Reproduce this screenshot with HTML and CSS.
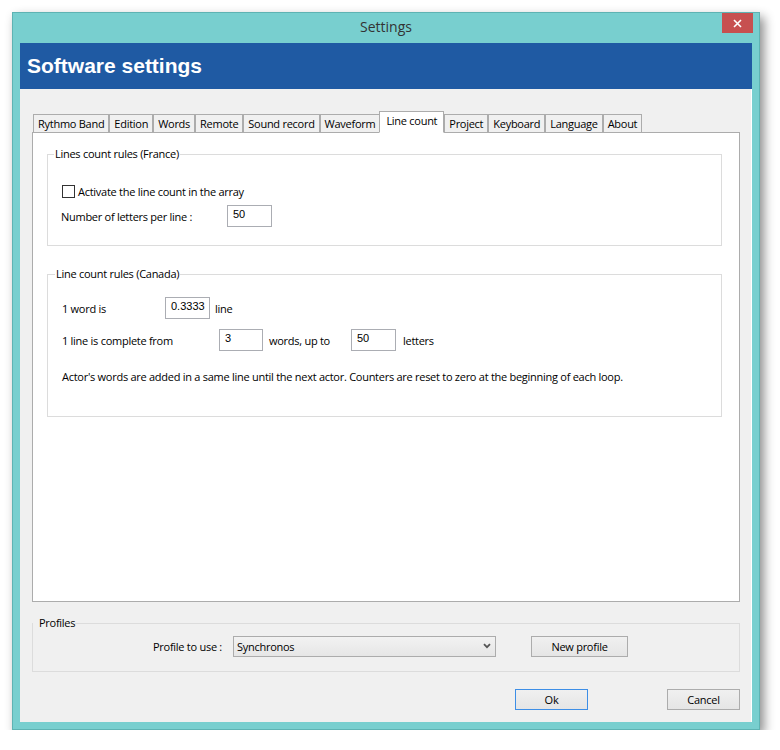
FILE: index.html
```html
<!DOCTYPE html>
<html>
<head>
  <meta charset="utf-8">
  <title>Settings</title>
  <link rel="stylesheet" href="styles.css">
</head>
<body>

  <div class="window">
    <div class="titlebar">
      <span class="title">Settings</span>
      <button class="close" type="button">
        <svg width="9" height="9" viewBox="0 0 9 9"><path d="M1 1L8 8M8 1L1 8" stroke="#fff" stroke-width="1.6" fill="none"/></svg>
      </button>
    </div>

    <div class="client">
      <div class="banner">Software settings</div>

      <section class="tabs">
        <ul class="tab-list">
          <li class="tab">Rythmo Band</li>
          <li class="tab">Edition</li>
          <li class="tab">Words</li>
          <li class="tab">Remote</li>
          <li class="tab">Sound record</li>
          <li class="tab">Waveform</li>
          <li class="tab active">Line count</li>
          <li class="tab">Project</li>
          <li class="tab">Keyboard</li>
          <li class="tab">Language</li>
          <li class="tab">About</li>
        </ul>

        <div class="panel">
          <fieldset class="group france">
            <legend>Lines count rules (France)</legend>
            <label class="row check-row">
              <span class="checkbox"></span>
              <span>Activate the line count in the array</span>
            </label>
            <div class="row">
              <span class="label label-letters">Number of letters per line :</span>
              <span class="field">50</span>
            </div>
          </fieldset>

          <fieldset class="group canada">
            <legend>Line count rules (Canada)</legend>
            <div class="row">
              <span class="label label-word">1 word is</span>
              <span class="field">0.3333</span>
              <span class="after">line</span>
            </div>
            <div class="row row-gap">
              <span class="label label-line">1 line is complete from</span>
              <span class="field">3</span>
              <span class="after words">words, up to</span>
              <span class="field">50</span>
              <span class="after letters">letters</span>
            </div>
            <p class="note">Actor's words are added in a same line until the next actor. Counters are reset to zero at the beginning of each loop.</p>
          </fieldset>
        </div>
      </section>

      <fieldset class="group profiles">
        <legend>Profiles</legend>
        <div class="profile-row">
          <span class="profile-label">Profile to use :</span>
          <div class="select">
            <span>Synchronos</span>
            <svg width="8" height="6" viewBox="0 0 8 6"><path d="M1 1.2L4 4.2L7 1.2" stroke="#555" stroke-width="1.8" fill="none"/></svg>
          </div>
          <button class="btn new-profile" type="button">New profile</button>
        </div>
      </fieldset>

      <div class="actions">
        <button class="btn default" type="button">Ok</button>
        <button class="btn" type="button">Cancel</button>
      </div>
    </div>
  </div>

</body>
</html>
```

FILE: styles.css
```css
* {
  box-sizing: border-box;
}

body {
  margin: 0;
  background: #fff;
  font-family: "Open Sans", "Noto Sans", sans-serif;
  font-size: 11px;
  letter-spacing: -0.27px;
  color: #000;
}

.window {
  margin: 12px 0 0 12px;
  width: 748px;
  height: 718px;
  border: 1px solid #5eb3b3;
  background: #78cfcf;
  padding: 0 7px 7px 7px;
  display: flex;
  flex-direction: column;
  box-shadow: 4px 5px 10px rgba(0, 0, 0, 0.45);
}

.titlebar {
  position: relative;
  height: 30px;
  display: flex;
  align-items: center;
  justify-content: center;
}

.title {
  font-size: 14px;
  letter-spacing: 0;
  color: #333;
  margin-top: -3px;
}

/* close button sits over the title bar's right corner */
.close {
  position: absolute;
  top: 0;
  right: -1px;
  width: 31px;
  height: 20px;
  border: 0;
  padding: 0;
  background: #c75050;
  display: flex;
  align-items: center;
  justify-content: center;
}

.client {
  flex: 1;
  background: #f0f0f0;
  display: flex;
  flex-direction: column;
  padding: 0 11px 0 12px;
  border-right: 1px solid #fff;
}

.banner {
  margin: 0 -12px 0 -12px;
  height: 46px;
  background: #1f5aa3;
  color: #fff;
  font-family: "Liberation Sans", Arial, sans-serif;
  font-weight: bold;
  font-size: 21px;
  letter-spacing: 0;
  padding-left: 7px;
  display: flex;
  align-items: center;
  padding-bottom: 1px;
}

/* tabs */
.tabs {
  margin-top: 22px;
}

.tab-list {
  list-style: none;
  margin: 0 0 -1px 0;
  padding: 0 0 0 1px;
  display: flex;
  align-items: flex-end;
  position: relative;
  z-index: 1;
}

.tab {
  height: 19px;
  border: 1px solid #acacac;
  background: #f0f0f0;
  padding: 0 4px;
  line-height: 17px;
  white-space: nowrap;
}

.tab.active {
  height: 22px;
  background: #fff;
  border-bottom-color: #fff;
  line-height: 17px;
  margin: 0 0 0 -1px;
  padding: 0 6px;
}

.panel {
  height: 470px;
  background: #fff;
  border: 1px solid #acacac;
  padding: 13px 17px 0 14px;
}

.group {
  border: 1px solid #dcdcdc;
  margin: 0;
  min-width: 0;
}

.group legend {
  padding: 0 1px;
  margin-left: -7px;
  line-height: 16px;
}

.france {
  padding: 18px 14px 18px 13px;
}

.check-row {
  padding-left: 1px;
}

.canada {
  margin-top: 20px;
  padding: 15px 14px 31px 14px;
}

.row {
  display: flex;
  align-items: center;
  height: 22px;
}

.check-row + .row {
  margin-top: 3px;
}

.row-gap {
  margin-top: 10px;
}

.checkbox {
  width: 13px;
  height: 13px;
  border: 1px solid #333;
  background: #fff;
  margin-right: 3px;
}

.label-letters {
  width: 166px;
}

.label-word {
  width: 103px;
}

.label-line {
  width: 157px;
}

.field {
  width: 45px;
  height: 22px;
  border: 1px solid #abadb3;
  background: #fff;
  font-family: "Liberation Sans", Arial, sans-serif;
  font-size: 11px;
  letter-spacing: 0;
  line-height: 16px;
  padding: 0 5px;
}

.label-line + .field {
  width: 44px;
}

.after {
  margin-left: 5px;
}

.words {
  width: 82px;
  margin-left: 6px;
}

.letters {
  margin-left: 7px;
}

.note {
  margin: 18px 0 0 0;
  line-height: 16px;
}

/* profiles + dialog buttons */
.profiles {
  margin-top: 13px;
  padding: 4px 12px 14px 0;
}

.profiles legend {
  margin-left: 0;
  padding: 0 0 0 6px;
}

.profile-row {
  display: flex;
  align-items: center;
  height: 22px;
}

.profile-label {
  width: 189px;
  text-align: right;
  margin-right: 11px;
}

.select {
  width: 263px;
  height: 21px;
  border: 1px solid #acacac;
  background: linear-gradient(#f2f2f2, #e6e6e6);
  display: flex;
  align-items: center;
  justify-content: space-between;
  padding: 0 4px 0 3px;
}

.btn {
  font-family: "Open Sans", "Noto Sans", sans-serif;
  font-size: 11px;
  letter-spacing: -0.27px;
  color: #000;
  width: 73px;
  height: 21px;
  border: 1px solid #acacac;
  background: linear-gradient(#f0f0f0, #e5e5e5);
  padding: 0;
}

.new-profile {
  width: 97px;
  margin-left: 35px;
}

.actions {
  margin-top: 17px;
  display: flex;
  justify-content: flex-end;
  gap: 79px;
}

.btn.default {
  border-color: #3d8ee6;
}
```
